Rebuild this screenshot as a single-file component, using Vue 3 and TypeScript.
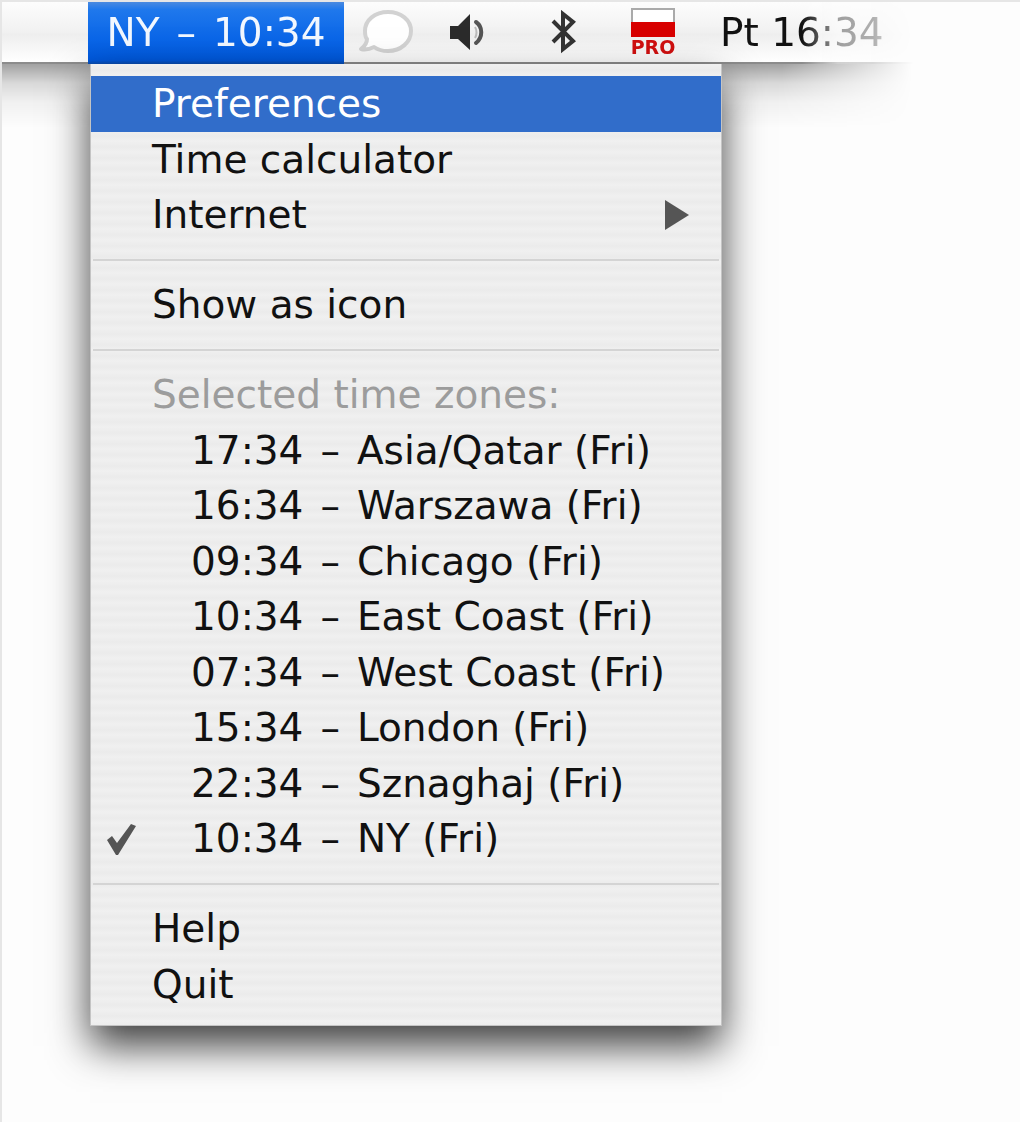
<script setup lang="ts">
import { ref } from 'vue'

interface Zone {
  time: string
  name: string
}

const zones: Zone[] = [
  { time: '17:34', name: 'Asia/Qatar (Fri)' },
  { time: '16:34', name: 'Warszawa (Fri)' },
  { time: '09:34', name: 'Chicago (Fri)' },
  { time: '10:34', name: 'East Coast (Fri)' },
  { time: '07:34', name: 'West Coast (Fri)' },
  { time: '15:34', name: 'London (Fri)' },
  { time: '22:34', name: 'Sznaghaj (Fri)' },
  { time: '10:34', name: 'NY (Fri)' },
]

const active = ref('Preferences')
const selected = ref(7)
</script>

<template>
  <div class="desktop">
    <header class="bar">
      <div class="strip">
        <button class="title" type="button" aria-haspopup="menu" aria-expanded="true">
          <span>NY</span><span class="dash">–</span><span>10:34</span>
        </button>
        <button class="status chat" type="button" aria-label="Messages">
          <svg width="58" height="48" viewBox="0 0 58 48">
            <path
              d="M30 4C43 4 53 12 53 23C53 34 43 43 30 43C25 43 20 42 16 39C12 41 7 42 3 41C7 38 9 35 9 31C7 29 7 26 7 23C7 12 17 4 30 4Z"
              fill="#fff" stroke="#d2d2d2" stroke-width="4" stroke-linejoin="round"
            />
          </svg>
        </button>
        <button class="status sound" type="button" aria-label="Volume">
          <svg width="36" height="38" viewBox="0 0 36 38">
            <path d="M1 13H9L21 1V37L9 26H1Z" fill="#2b2b2b" />
            <path d="M27 9C34 14 34 24 27 30" fill="none" stroke="#555" stroke-width="4" stroke-linecap="round" />
            <path d="M26 14C28 17 28 22 26 25" fill="none" stroke="#bbb" stroke-width="2" />
          </svg>
        </button>
        <button class="status bluetooth" type="button" aria-label="Bluetooth">
          <svg width="26" height="44" viewBox="0 0 26 44">
            <path
              d="M2 11L22 31L12 39V4L22 12L2 32"
              fill="none" stroke="#333" stroke-width="4" stroke-linejoin="miter"
            />
          </svg>
        </button>
        <button class="status layout" type="button" aria-label="Keyboard layout: Polish Pro">
          <svg width="44" height="29" viewBox="0 0 44 29">
            <path d="M1 14V1H43V14" fill="#fff" stroke="#aaa" stroke-width="2" />
            <path d="M0 14H44V29H0Z" fill="#d80000" />
          </svg>
          <span class="pro">PRO</span>
        </button>
        <time class="clock">Pt 16:34</time>
      </div>
    </header>

    <ul class="menu" role="menu">
      <li class="row">
        <button
          class="item" :class="{ active: active === 'Preferences' }"
          type="button" role="menuitem" @mouseenter="active = 'Preferences'"
        >Preferences</button>
      </li>
      <li class="row">
        <button
          class="item" :class="{ active: active === 'Time calculator' }"
          type="button" role="menuitem" @mouseenter="active = 'Time calculator'"
        >Time calculator</button>
      </li>
      <li class="row">
        <button
          class="item" :class="{ active: active === 'Internet' }"
          type="button" role="menuitem" aria-haspopup="menu" @mouseenter="active = 'Internet'"
        >
          <span>Internet</span>
          <svg class="arrow" width="24" height="30" viewBox="0 0 24 30">
            <path d="M0 0L24 15L0 30Z" fill="currentColor" />
          </svg>
        </button>
      </li>
      <li class="separator" role="separator"></li>
      <li class="row">
        <button
          class="item" :class="{ active: active === 'Show as icon' }"
          type="button" role="menuitem" @mouseenter="active = 'Show as icon'"
        >Show as icon</button>
      </li>
      <li class="separator" role="separator"></li>
      <li class="row heading">Selected time zones:</li>
      <li v-for="(zone, index) in zones" :key="index" class="row">
        <button
          class="item zone" :class="{ active: active === zone.name }"
          type="button" role="menuitemradio" :aria-checked="selected === index"
          @mouseenter="active = zone.name" @click="selected = index"
        >
          <span class="mark">
            <svg v-if="selected === index" width="32" height="34" viewBox="0 0 32 34">
              <path d="M1 18L6 14L11 21L25 2L30 4L12 33H10Z" fill="currentColor" />
            </svg>
          </span>
          <span>{{ zone.time }}</span><span class="dash">–</span><span>{{ zone.name }}</span>
        </button>
      </li>
      <li class="separator" role="separator"></li>
      <li class="row">
        <button
          class="item" :class="{ active: active === 'Help' }"
          type="button" role="menuitem" @mouseenter="active = 'Help'"
        >Help</button>
      </li>
      <li class="row">
        <button
          class="item" :class="{ active: active === 'Quit' }"
          type="button" role="menuitem" @mouseenter="active = 'Quit'"
        >Quit</button>
      </li>
    </ul>
  </div>
</template>

<style>
body {
  margin: 0;
  background: #fdfdfd;
}
</style>

<style scoped>
.desktop {
  box-sizing: border-box;
  min-height: 100vh;
  border-top: 2px solid #e6e6e6;
  border-left: 2px solid #e6e6e6;
  font-family: "DejaVu Sans", sans-serif;
  font-size: 39px;
  line-height: 48px;
  color: #111;
}

button {
  margin: 0;
  padding: 0;
  border: 0;
  background: none;
  font: inherit;
  color: inherit;
}

.bar {
  position: relative;
}

/* Shadow that the bar casts on the desktop */
.bar::after {
  content: "";
  position: absolute;
  top: 100%;
  left: 0;
  width: 920px;
  height: 64px;
  background: linear-gradient(#0000005c, #00000024 30%, #0000000c 60%, transparent);
  mask-image: linear-gradient(90deg, #000 780px, transparent 910px);
}

.strip {
  display: flex;
  align-items: stretch;
  height: 60px;
  padding-left: 86px;
  border-bottom: 2px solid #8c8c8c;
  background: linear-gradient(#fdfdfd, #f1f1f1 50%, #eee 54%, #fff);
  mask-image: linear-gradient(90deg, #000 800px, #0006 836px, #0005 870px, transparent 912px);
}

.title {
  display: flex;
  align-items: center;
  justify-content: center;
  width: 256px;
  margin-bottom: -2px;
  background: linear-gradient(#4a8ae0, #1f78ec 12%, #0a66e8 60%, #0058dc 94%, #0a4cae);
  color: #f2f8ff;
}

.dash {
  margin: 0 17px;
}

.status {
  display: flex;
  flex-direction: column;
  align-items: center;
  justify-content: center;
}

.chat {
  width: 86px;
}

.sound {
  width: 74px;
}

.bluetooth {
  width: 120px;
}

.layout {
  width: 58px;
}

.pro {
  font-size: 19px;
  font-weight: bold;
  line-height: 20px;
  color: #d01010;
}

.clock {
  display: flex;
  align-items: center;
  padding: 2px 0 0 38px;
}

.menu {
  position: relative;
  z-index: 1;
  box-sizing: border-box;
  width: max-content;
  min-width: 632px;
  margin: 0 0 0 88px;
  padding: 12px 0 13px;
  border: 1px solid #c4c4c4;
  border-top: 0;
  list-style: none;
  background: repeating-linear-gradient(#f0f0f0 0, #ebebeb 6px, #f0f0f0 11px);
  box-shadow: 0 20px 38px #000000c0;
}

.row {
  height: 56px;
}

.row:nth-child(even) {
  height: 55px;
}

.item,
.heading {
  display: flex;
  align-items: center;
  box-sizing: border-box;
  width: 100%;
  padding: 0 32px 0 61px;
  text-align: left;
}

.item {
  height: 100%;
}

.item.active {
  background: #316dca;
  color: #fff;
}

.heading {
  color: #9c9c9c;
}

.arrow {
  margin-left: auto;
  color: #555;
}

.zone {
  padding-left: 15px;
}

.mark {
  display: flex;
  width: 85px;
  color: #555;
}

.separator {
  box-sizing: border-box;
  height: 34px;
  margin: 0 2px;
  padding: 16px 0;
  background: #d4d4d4 content-box;
}
</style>
